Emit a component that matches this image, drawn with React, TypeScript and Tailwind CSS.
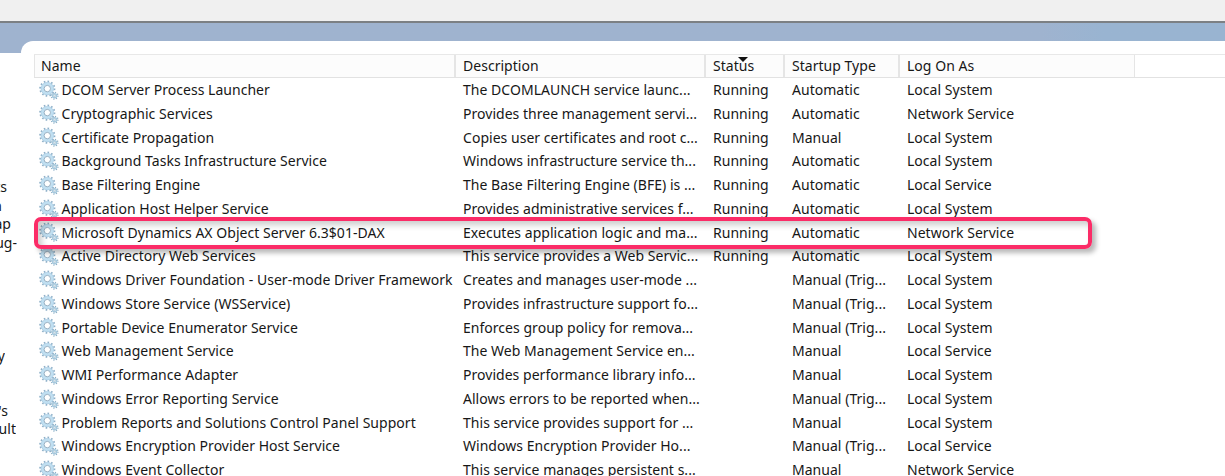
import React from "react";

type Service = [name: string, description: string, running: boolean, startup: string, logOn: string];

const services: Service[] = [
  ["DCOM Server Process Launcher", "The DCOMLAUNCH service launc...", true, "Automatic", "Local System"],
  ["Cryptographic Services", "Provides three management servi...", true, "Automatic", "Network Service"],
  ["Certificate Propagation", "Copies user certificates and root c...", true, "Manual", "Local System"],
  ["Background Tasks Infrastructure Service", "Windows infrastructure service th...", true, "Automatic", "Local System"],
  ["Base Filtering Engine", "The Base Filtering Engine (BFE) is ...", true, "Automatic", "Local Service"],
  ["Application Host Helper Service", "Provides administrative services f...", true, "Automatic", "Local System"],
  ["Microsoft Dynamics AX Object Server 6.3$01-DAX", "Executes application logic and ma...", true, "Automatic", "Network Service"],
  ["Active Directory Web Services", "This service provides a Web Servic...", true, "Automatic", "Local System"],
  ["Windows Driver Foundation - User-mode Driver Framework", "Creates and manages user-mode ...", false, "Manual (Trig...", "Local System"],
  ["Windows Store Service (WSService)", "Provides infrastructure support fo...", false, "Manual (Trig...", "Local System"],
  ["Portable Device Enumerator Service", "Enforces group policy for remova...", false, "Manual (Trig...", "Local System"],
  ["Web Management Service", "The Web Management Service en...", false, "Manual", "Local Service"],
  ["WMI Performance Adapter", "Provides performance library info...", false, "Manual", "Local System"],
  ["Windows Error Reporting Service", "Allows errors to be reported when...", false, "Manual (Trig...", "Local System"],
  ["Problem Reports and Solutions Control Panel Support", "This service provides support for ...", false, "Manual", "Local System"],
  ["Windows Encryption Provider Host Service", "Windows Encryption Provider Ho...", false, "Manual (Trig...", "Local Service"],
  ["Windows Event Collector", "This service manages persistent s...", false, "Manual", "Network Service"],
];

const columns = "grid grid-cols-[422px_250px_79px_115px_235px_1fr]";

function Gears() {
  return (
    <svg viewBox="0 0 20 20" className="h-5 w-5 shrink-0" fill="none">
      <circle cx="8.3" cy="8.6" r="7.2" stroke="#8fb0c8" strokeWidth="1.8" strokeDasharray="1.6 2.17" />
      <circle cx="8.3" cy="8.6" r="4.9" stroke="#c0dff1" strokeWidth="3.1" />
      <circle cx="8.3" cy="8.6" r="6.3" stroke="#9cc1da" strokeWidth="0.5" />
      <circle cx="8.3" cy="8.6" r="3.2" fill="#fff" stroke="#8ba7bc" strokeWidth="0.9" />
      <circle cx="15.6" cy="15.7" r="3.3" stroke="#8dafc6" strokeWidth="1.4" strokeDasharray="1.1 1.49" />
      <circle cx="15.6" cy="15.7" r="2" fill="#edf7fc" stroke="#a6c9de" strokeWidth="1.5" />
      <circle cx="15.6" cy="15.7" r="0.8" fill="#fff" stroke="#7e9fb5" strokeWidth="0.4" />
    </svg>
  );
}

function Header() {
  const cell = "border-r-2 border-[#e5e5e5] pl-[7px]";
  return (
    <div className={`${columns} h-6 border-y border-[#e2e2e2] border-t-[#e8e8e8] leading-[22px]`}>
      <div className="border-l border-r-2 border-[#e5e5e5] bg-[#fcfcfc] pl-[6px]">Name</div>
      <div className={`${cell} bg-[#fcfcfc]`}>Description</div>
      <div className={`${cell} relative bg-[#fcfcfc]`}>
        Status
        <svg viewBox="0 0 10 5" className="absolute left-[32px] top-[2px] h-[5px] w-[10px]">
          <path d="M0 0H10L5 5Z" fill="#111" />
        </svg>
      </div>
      <div className={`${cell} bg-[#fcfcfc]`}>Startup Type</div>
      <div className="border-r border-[#e5e5e5] bg-[#fcfcfc] pl-[7px]">Log On As</div>
      <div />
    </div>
  );
}

export default function App() {
  return (
    <div className="flex h-[476px] w-[1225px] flex-col overflow-hidden whitespace-nowrap bg-white font-['Noto_Sans','Open_Sans',sans-serif] text-[14px] tracking-[0.03px] text-[#171717]">
      <div className="h-[23px] shrink-0 border-b-2 border-[#7c8084] bg-[#f0f0f0]" />
      <div className="h-[18px] shrink-0 bg-gradient-to-r from-[#9fb3cf] from-85% to-[#99b4d1] to-90%" />
      <div className="flex min-h-0 flex-1">
        <aside className="flex w-[21px] shrink-0 flex-col items-start text-[14px] leading-[18.7px]">
          <div className="h-3 w-full bg-[#9fb3cf]" />
          <div className="mt-[125px] flex flex-col">
            <span className="flex w-[7px] justify-end overflow-hidden">ts</span>
            <span className="flex w-[2px] justify-end overflow-hidden">n</span>
            <span className="flex w-[11px] justify-end overflow-hidden">ap</span>
            <span className="flex w-[17px] justify-end overflow-hidden">ug-</span>
          </div>
          <span className="mt-[94px] flex w-[5px] justify-end overflow-hidden">y</span>
          <div className="mt-[36px] flex flex-col">
            <span className="flex w-[8px] justify-end overflow-hidden">'s</span>
            <span className="flex w-[16px] justify-end overflow-hidden">ult</span>
          </div>
        </aside>
        <div className="flex-1 bg-[linear-gradient(#9fb3cf,#9fb3cf)] bg-[length:12px_12px] bg-no-repeat">
          <main className="relative h-full rounded-tl-[12px] bg-white pl-[13px] pt-[13px]">
            <Header />
            <div>
              {services.map(([name, description, running, startup, logOn]) => (
                <div key={name} className={`${columns} h-[23.75px] leading-[23.5px]`}>
                  <div className="flex items-center gap-[2.5px] pl-[5px]">
                    <Gears />
                    <span>{name}</span>
                  </div>
                  <span className="pl-[7px]">{description}</span>
                  <span className="pl-[7px]">{running ? "Running" : ""}</span>
                  <span className="pl-[7px]">{startup}</span>
                  <span className="pl-[7px]">{logOn}</span>
                  <span />
                </div>
              ))}
            </div>
            <div className="absolute left-[13px] top-[176px] h-[32px] w-[1058px] rounded-[7px] border-4 border-[#fb2c67] shadow-[4px_4px_5px_rgba(0,0,0,0.28),inset_4px_4px_6px_rgba(0,0,0,0.2)]" />
          </main>
        </div>
      </div>
    </div>
  );
}
